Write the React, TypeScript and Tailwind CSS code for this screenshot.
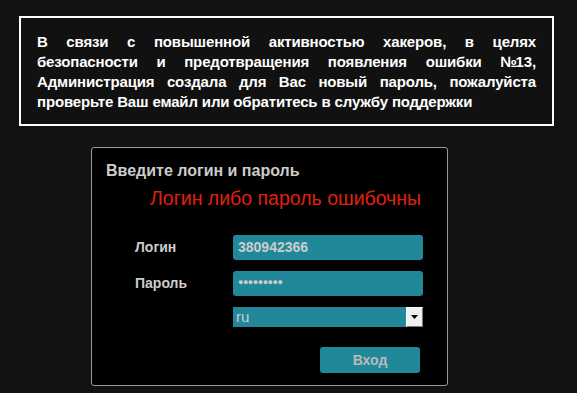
import React from 'react';

const teal = 'bg-[#21889a]';

const Field: React.FC<{ label: string; value: string; dots?: boolean }> = ({ label, value, dots }) => (
  <div className="flex items-center h-[25px]">
    <div className="w-[141px] pl-[43px] text-[14px] font-bold text-[#cccccc]">{label}</div>
    <div className={`w-[190px] h-[25px] ${teal} rounded-[3px] flex items-center pl-[5px] text-[14px] font-bold text-[#cccccc]`}>
      {dots ? <span className="text-[9px] tracking-[-0.5px] mt-[-2px]">●●●●●●●●●</span> : value}
    </div>
  </div>
);

export default function App() {
  return (
    <div className="min-h-[393px] bg-[#121212] pt-[16px] pb-[8px]" style={{ fontFamily: '"Liberation Sans", Arial, sans-serif' }}>
      <div className="mx-[19px] w-[535px] border-2 border-white bg-[#111111] pt-[14px] pb-[12px] px-[16px]">
        <div className="text-[15px] leading-[20px] font-bold text-white tracking-[-0.15px]">
          <div className="text-justify [text-align-last:justify] whitespace-nowrap">В связи с повышенной активностью хакеров, в целях</div>
          <div className="text-justify [text-align-last:justify] whitespace-nowrap">
            безопасности и предотвращения появления ошибки <span className="inline-block tracking-[-1.5px]">№</span>13,
          </div>
          <div className="text-justify [text-align-last:justify] whitespace-nowrap">Администрация создала для Вас новый пароль, пожалуйста</div>
          <div className="whitespace-nowrap">проверьте Ваш емайл или обратитесь в службу поддержки</div>
        </div>
      </div>

      <div className="ml-[91px] mt-[21px] w-[357px] h-[239px] border border-[#9a9a9a] rounded-[3px] bg-black">
        <div className="pl-[14px] pt-[13px] text-[16px] leading-[20px] font-bold text-[#cccccc]">Введите логин и пароль</div>
        <div className="pl-[58px] mt-[5px] text-[19.5px] leading-[24px] text-[#e0200e]">Логин либо пароль ошибочны</div>

        <div className="mt-[25px] flex flex-col gap-[11px]">
          <Field label="Логин" value="380942366" />
          <Field label="Пароль" value="" dots />
        </div>

        <div className="mt-[11px] ml-[141px] w-[190px] h-[20px] flex bg-[#21889a]">
          <div className="flex-1 pl-[3px] text-[15px] leading-[20px] text-[#cccccc]">ru</div>
          <div className="w-[17px] h-[20px] bg-[#f0f0f0] border-r border-b border-[#777777] border-t border-l border-t-white border-l-white flex items-center justify-center">
            <svg width="7" height="4" viewBox="0 0 7 4"><path d="M0 0h7L3.5 4z" fill="#000" /></svg>
          </div>
        </div>

        <div className="mt-[20px] ml-[228px] w-[100px] h-[26px] bg-[#21889a] rounded-[3px] flex items-center justify-center text-[14px] font-bold text-[#bbbbbb]">
          Вход
        </div>
      </div>
    </div>
  );
}
